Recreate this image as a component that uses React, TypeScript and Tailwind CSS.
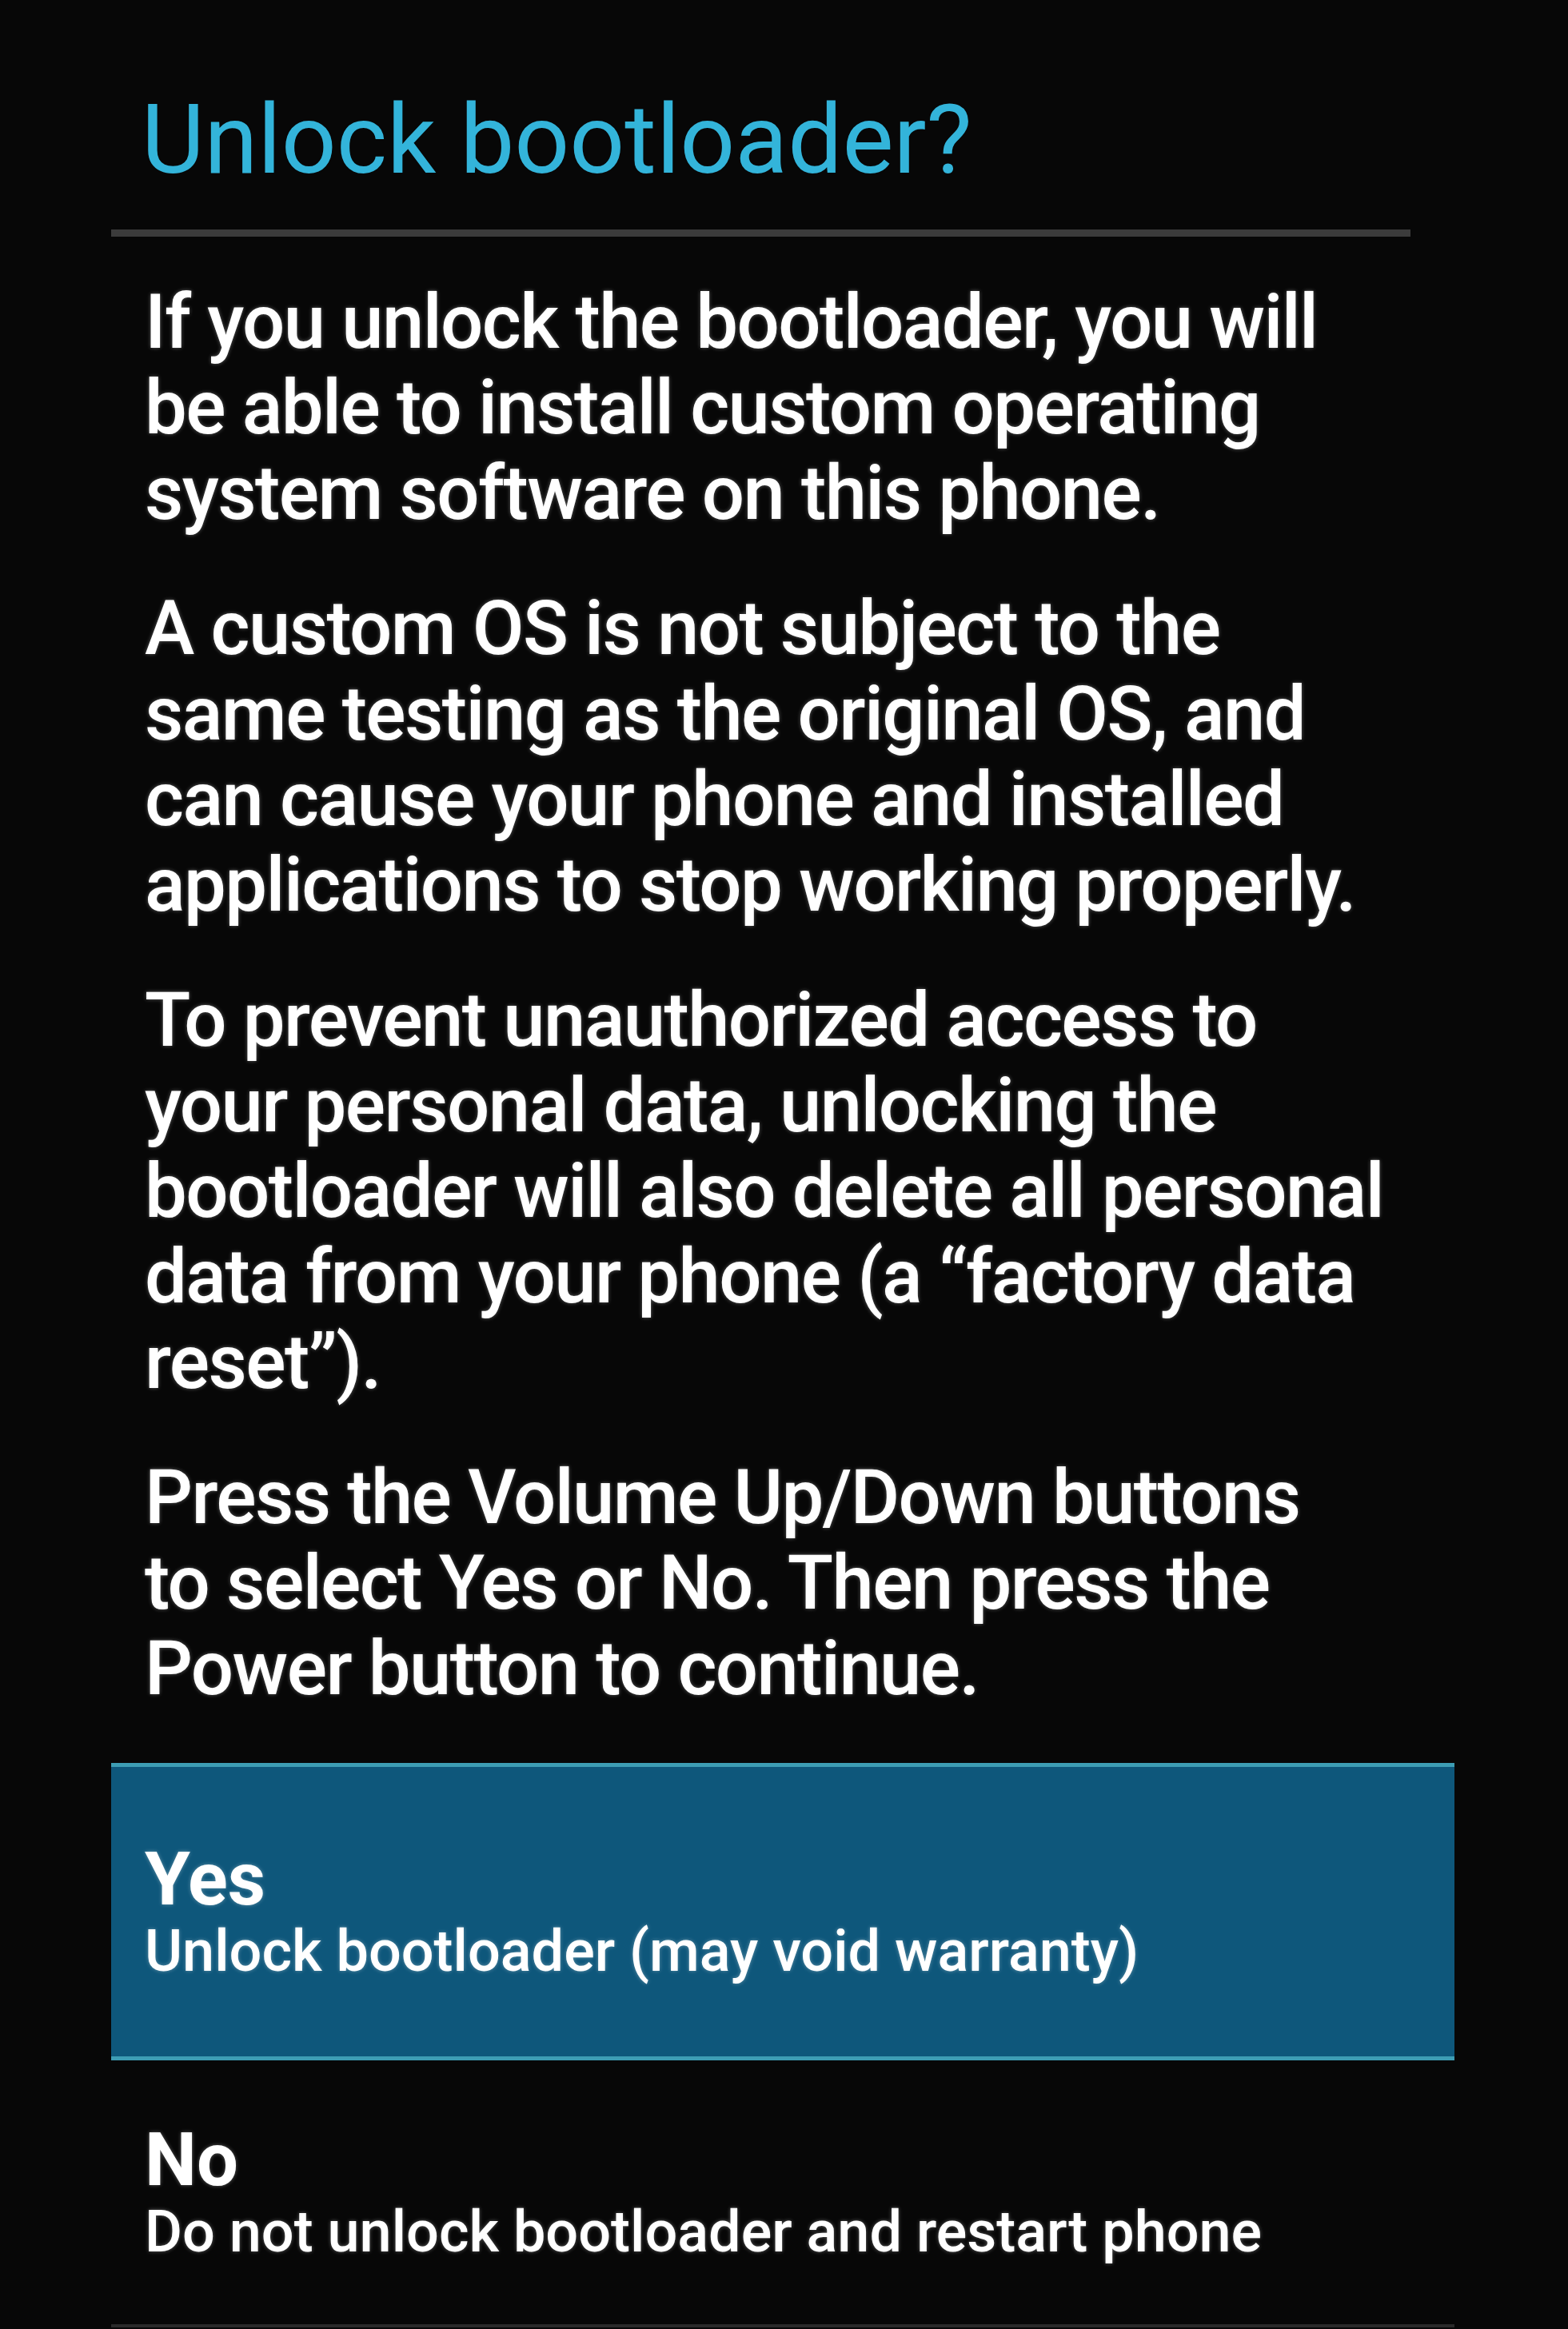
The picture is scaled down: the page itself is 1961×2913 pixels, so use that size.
const paragraphs: string[][] = [
  ["If you unlock the bootloader, you will", "be able to install custom operating", "system software on this phone."],
  [
    "A custom OS is not subject to the",
    "same testing as the original OS, and",
    "can cause your phone and installed",
    "applications to stop working properly.",
  ],
  [
    "To prevent unauthorized access to",
    "your personal data, unlocking the",
    "bootloader will also delete all personal",
    "data from your phone (a \u201cfactory data",
    "reset\u201d).",
  ],
  ["Press the Volume Up/Down buttons", "to select Yes or No. Then press the", "Power button to continue."],
];

type Choice = {
  label: string;
  hint: string;
  selected?: boolean;
};

const choices: Choice[] = [
  { label: "Yes", hint: "Unlock bootloader (may void warranty)", selected: true },
  { label: "No", hint: "Do not unlock bootloader and restart phone" },
];

function ChoiceRow({ label, hint, selected }: Choice) {
  return (
    <div
      className={
        selected
          ? "flex h-[372px] flex-col justify-center border-y-[5px] border-[#3d9db4] bg-[#0e577b] pl-[42px]"
          : "flex h-[330px] flex-col justify-center pl-[42px]"
      }
    >
      <span className="text-[92px] font-bold leading-[100px] text-white [text-shadow:0_0_5px_rgba(255,255,255,0.35)]">
        {label}
      </span>
      <span className="whitespace-nowrap text-[72px] font-medium leading-[80px] text-white [text-shadow:0_0_5px_rgba(255,255,255,0.35)]">
        {hint}
      </span>
    </div>
  );
}

export default function App() {
  return (
    <div className="min-h-[2913px] w-[1961px] overflow-hidden bg-[#070707] font-['Roboto',sans-serif]">
      <div className="ml-[139px] w-[1680px] pt-[110px]">
        <h1 className="pl-[38px] text-[121px] leading-[130px] text-[#33b4da]">Unlock bootloader?</h1>
        <div className="mt-[47px] h-[9px] w-[1625px] bg-[#3b3b3b]" />
        <div className="mt-[54px] flex flex-col gap-[62px] pl-[42px]">
          {paragraphs.map((lines) => (
            <p
              key={lines[0]}
              className="whitespace-nowrap text-[94px] font-medium leading-[107px] tracking-[-1.6px] text-white [text-shadow:0_0_5px_rgba(255,255,255,0.35)]"
            >
              {lines.map((line, i) => (
                <span key={line} className="block">
                  {line}
                  {i < lines.length - 1 ? " " : ""}
                </span>
              ))}
            </p>
          ))}
        </div>
        <div className="mt-[64px] flex flex-col">
          {choices.map((choice) => (
            <ChoiceRow key={choice.label} {...choice} />
          ))}
          <div className="h-[4px] w-[1680px] bg-[#2a2a2a]" />
        </div>
      </div>
    </div>
  );
}
